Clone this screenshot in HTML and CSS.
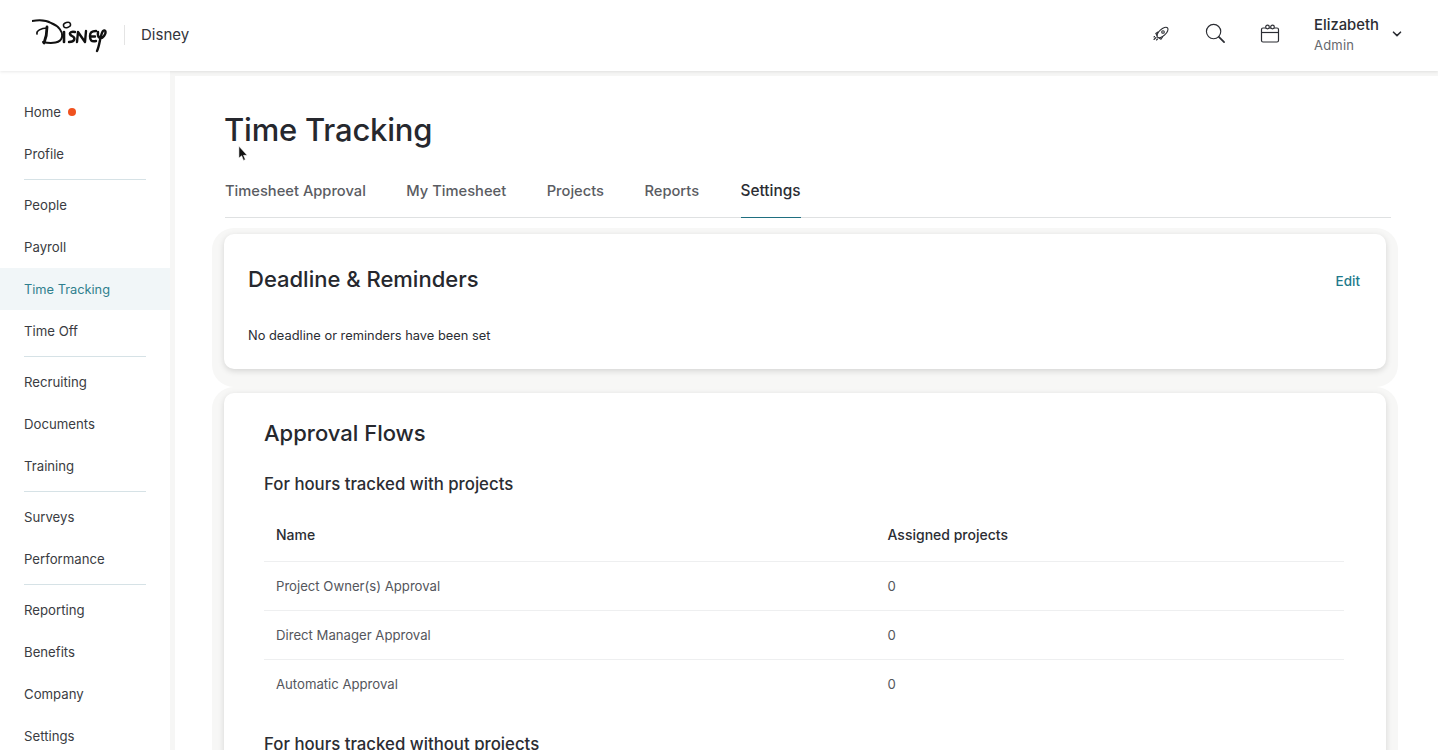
FILE: index.html
```html
<!DOCTYPE html>
<html lang="en">
<head>
<meta charset="utf-8">
<title>Time Tracking</title>
<link rel="stylesheet" href="styles.css">
</head>
<body>
<div class="app">
  <header class="topbar">
    <div class="brand">
      <svg class="logo" viewBox="0 0 78 36" fill="none" stroke="#111" stroke-linecap="round" stroke-linejoin="round">
        <path d="M0 4C6 3 14 3 19 6C27 9 31 15 30 20C29 26 20 27 11 25" stroke-width="2"/>
        <path d="M15 10C15 16 14 21 12 26" stroke-width="2.800"/>
        <path d="M5 17C4 14 9 11 15 11" stroke-width="1.600"/>
        <path d="M32 15V25" stroke-width="2.600"/>
        <ellipse cx="35" cy="8" rx="3.600" ry="2.500" stroke-width="1.500" transform="rotate(-15 35 8)"/>
        <path d="M43 15C38 14 36 17 40 19C44 21 43 25 37 25" stroke-width="2.400"/>
        <path d="M45 25L46 15L53 25L54 14" stroke-width="2.400"/>
        <path d="M64 14C59 14 58 16 58 19C58 23 59 25 64 24M58 19.500H63" stroke-width="2.400"/>
        <path d="M66 15C65 21 69 23 72 19C75 15 73 12 71 14C68 18 68 28 65 34" stroke-width="2.400"/>
      </svg>
      <span class="brand-sep"></span>
      <span class="brand-name">Disney</span>
    </div>
    <div class="top-actions">
      <svg class="ico ico-rocket" viewBox="0 0 18 18" fill="none" stroke="#2b2d33" stroke-width="1.100" stroke-linecap="round" stroke-linejoin="round">
        <ellipse cx="10.500" cy="7.500" rx="6.800" ry="3.300" transform="rotate(-42 10.500 7.500)"/>
        <circle cx="11" cy="7" r="1.300"/>
        <path d="M6 7L3.800 8.500L5 10.500M10.500 12L9 14.200L7 13M4 12.500L2 14.500M5.500 14L4.500 15M2.500 11.500L2 12"/>
      </svg>
      <svg class="ico ico-search" viewBox="0 0 22 22" fill="none" stroke="#2b2d33" stroke-linecap="round">
        <circle cx="9" cy="9" r="7.500" stroke-width="1.200"/>
        <path d="M14.500 14.500L20 20" stroke-width="1.800"/>
      </svg>
      <svg class="ico ico-cal" viewBox="0 0 20 20" fill="none" stroke="#2b2d33" stroke-width="1.200">
        <rect x="1.500" y="4" width="17" height="14" rx="1.500"/>
        <path d="M1.500 8.500H18.500"/>
        <circle cx="7.500" cy="3" r="1.800" fill="#fff"/>
        <circle cx="12.500" cy="3" r="1.800" fill="#fff"/>
      </svg>
      <div class="user">
        <div class="user-name">Elizabeth</div>
        <div class="user-role">Admin</div>
      </div>
      <svg class="chev" viewBox="0 0 10 6" fill="none" stroke="#2b2d33" stroke-width="1.600" stroke-linecap="round" stroke-linejoin="round"><path d="M1.500 1.200L5 4.600L8.500 1.200"/></svg>
    </div>
  </header>
  <div class="body">
    <nav class="sidebar">
      <a class="nav-item">Home<span class="dot"></span></a>
      <a class="nav-item">Profile</a>
      <hr class="nav-sep">
      <a class="nav-item">People</a>
      <a class="nav-item">Payroll</a>
      <a class="nav-item active">Time Tracking</a>
      <a class="nav-item">Time Off</a>
      <hr class="nav-sep">
      <a class="nav-item">Recruiting</a>
      <a class="nav-item">Documents</a>
      <a class="nav-item">Training</a>
      <hr class="nav-sep">
      <a class="nav-item">Surveys</a>
      <a class="nav-item">Performance</a>
      <hr class="nav-sep">
      <a class="nav-item">Reporting</a>
      <a class="nav-item">Benefits</a>
      <a class="nav-item">Company</a>
      <a class="nav-item">Settings</a>
    </nav>
    <main class="main">
      <h1 class="title">Time Tracking</h1>
      <div class="tabs">
        <a class="tab">Timesheet Approval</a>
        <a class="tab">My Timesheet</a>
        <a class="tab">Projects</a>
        <a class="tab">Reports</a>
        <a class="tab current">Settings</a>
      </div>
      <section class="card card-deadline">
        <div class="card-head">
          <h2 class="card-title">Deadline &amp; Reminders</h2>
          <a class="edit">Edit</a>
        </div>
        <p class="note">No deadline or reminders have been set</p>
      </section>
      <section class="card card-flows">
        <h2 class="card-title">Approval Flows</h2>
        <h3 class="sub">For hours tracked with projects</h3>
        <div class="row row-head"><span class="col-name">Name</span><span>Assigned projects</span></div>
        <div class="row"><span class="col-name">Project Owner(s) Approval</span><span>0</span></div>
        <div class="row"><span class="col-name">Direct Manager Approval</span><span>0</span></div>
        <div class="row row-last"><span class="col-name">Automatic Approval</span><span>0</span></div>
        <h3 class="sub sub-next">For hours tracked without projects</h3>
      </section>
    </main>
  </div>
  <svg class="cursor" viewBox="0 0 12 18"><path d="M1 1V14L4 11.500L6 16.500L8 15.500L6 11H10Z" fill="#111" stroke="#fff" stroke-width=".6"/></svg>
</div>
</body>
</html>
```
FILE: styles.css
```css
* { box-sizing: border-box; }
html, body { margin: 0; height: 100%; overflow: hidden; }
body { font-family: "Inter", "Liberation Sans", sans-serif; color: #2b2d33; background: #fff; }
.app { position: relative; height: 750px; display: flex; flex-direction: column; overflow: hidden; }

.topbar { position: relative; z-index: 2; height: 71px; flex: none; display: flex; align-items: center; justify-content: space-between; padding: 0 36px 2px 32px; background: #fff; box-shadow: 0 1px 3px rgba(0,0,0,.09); }
.brand { display: flex; align-items: center; }
.logo { width: 78px; height: 36px; margin-top: 1px; }
.brand-sep { width: 1px; height: 20px; background: #e4e4e4; margin: 0 16px 0 14px; }
.brand-name { font-size: 15px; color: #33353b; }
.top-actions { display: flex; align-items: center; }
.ico { display: block; flex: none; margin-bottom: 2px; }
.ico-rocket { width: 18px; height: 18px; }
.ico-search { width: 21px; height: 21px; margin-left: 35px; }
.ico-cal { width: 20px; height: 20px; margin-left: 34px; }
.user { margin-left: 34px; width: 78px; }
.user-name { font-size: 14.800px; font-weight: 500; line-height: 20px; color: #2b2d33; }
.user-role { font-size: 13px; line-height: 20px; color: #66686e; letter-spacing: .2px; }
.chev { width: 10px; height: 6px; flex: none; margin-bottom: 2px; }

.body { flex: 1; display: flex; min-height: 0; }
.sidebar { width: 175px; flex: none; padding: 20px 0 0 0; border-right: 5px solid #f6f6f5; background: #fff; display: flex; flex-direction: column; }
.nav-item { display: flex; align-items: center; flex: none; height: 42px; padding-left: 24px; font-size: 13.200px; color: #3a3c42; }
.nav-item.active { background: #f1f6f8; color: #2f7f8e; font-size: 12.800px; }
.dot { width: 8px; height: 8px; border-radius: 50%; background: #f0521f; margin-left: 7px; }
.nav-sep { flex: none; width: 122px; height: 1px; margin: 4px 0 4px 24px; border: 0; background: #d6e2e6; }

.main { flex: 1; min-width: 0; padding: 0 47px 0 49px; border-top: 5px solid #f6f6f5; }
.title { margin: 33px 0 0; font-size: 31px; line-height: 42px; font-weight: 500; color: #26282e; letter-spacing: -.2px; }
.tabs { display: flex; gap: 40.500px; height: 48px; margin: 19px 0 16px 1px; border-bottom: 1px solid #dfe1e2; }
.tab { display: block; height: 48px; padding-top: 11px; font-size: 14.700px; line-height: 20px; font-weight: 500; color: #5a5c62; }
.tab.current { color: #2b2d33; font-size: 15.400px; margin-left: 1px; border-bottom: 1px solid #1f6f80; }

.card { width: 1162px; background: #fff; border-radius: 10px; box-shadow: 0 2px 6px rgba(0,0,0,.14), 0 6px 0 12px #f7f7f6; }
.card-deadline { height: 135px; padding: 30px 26px 0 24px; margin-bottom: 24px; }
.card-head { display: flex; justify-content: space-between; align-items: center; }
.card-title { margin: 0; font-size: 22px; line-height: 30px; font-weight: 500; color: #26282e; }
.edit { font-size: 13.500px; font-weight: 500; color: #1d7a8c; margin-top: 4px; }
.note { margin: 32px 0 0; font-size: 12.850px; line-height: 20px; color: #2b2d33; }
.card-flows { height: 500px; padding: 25px 42px 0 40px; }
.sub { margin: 24px 0 0; font-size: 16.800px; line-height: 24px; font-weight: 500; color: #2b2d33; }
.row { display: flex; height: 49px; align-items: center; border-bottom: 1px solid #eeeff0; font-size: 13.150px; color: #54565c; }
.row-head { margin-top: 12px; height: 54px; font-size: 14px; font-weight: 500; color: #2b2d33; }
.row-last { border-bottom-color: transparent; }
.col-name { width: 611.500px; margin-left: 12px; flex: none; }
.sub-next { margin-top: 23px; }
.cursor { position: absolute; left: 238px; top: 145px; width: 11px; height: 17px; z-index: 3; }
```
